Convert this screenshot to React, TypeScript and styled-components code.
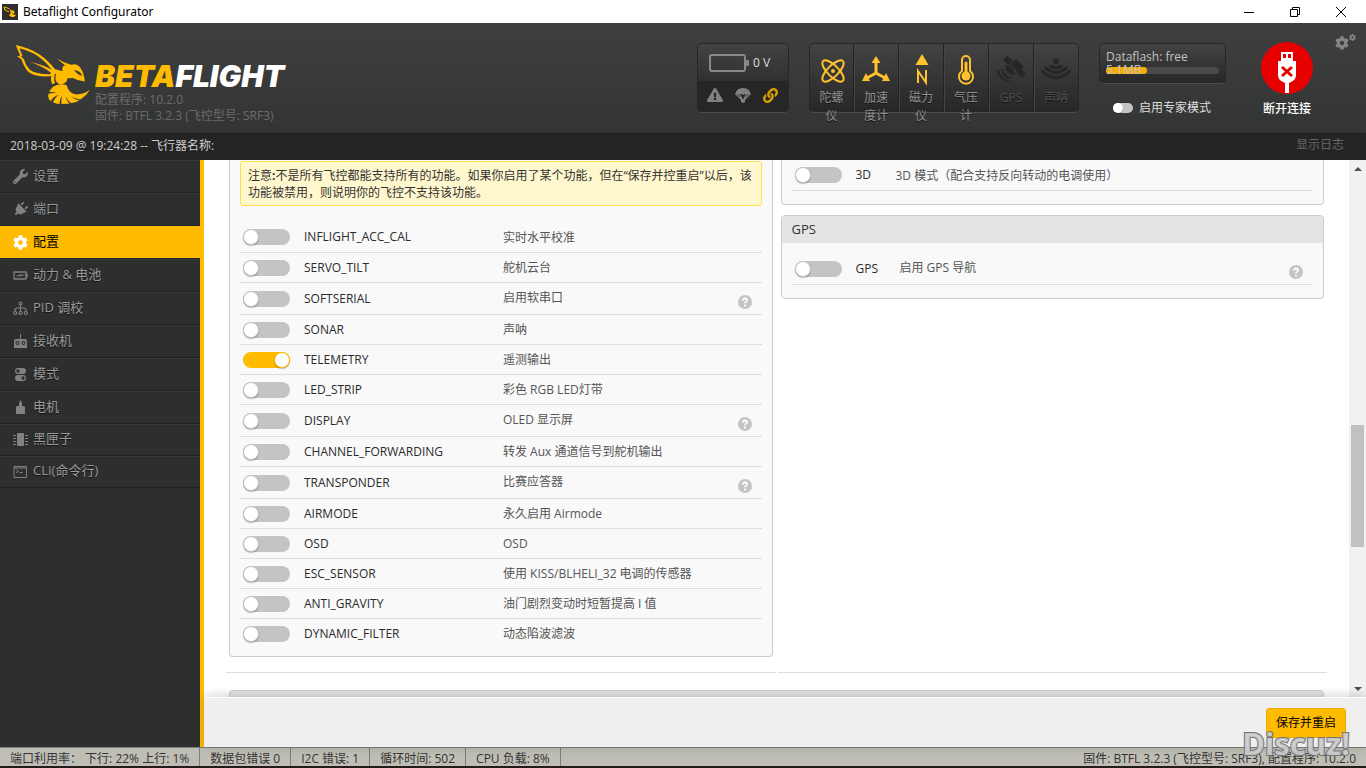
import React from 'react';
import styled, { createGlobalStyle } from 'styled-components';
import { FaWrench, FaPlug, FaCog, FaLink, FaExclamationTriangle } from 'react-icons/fa';

const GlobalStyle = createGlobalStyle`
  *, *::before { box-sizing: border-box; }
  body { margin: 0; background: #fff; }
  body, button, input {
    font-family: "Open Sans", "Noto Sans CJK SC", sans-serif;
    font-size: 12px;
  }
  button { border: 0; padding: 0; background: none; color: inherit; cursor: pointer; }
  a { color: inherit; text-decoration: none; }
  svg { display: block; flex: none; }
`;

/* ---------- window frame ---------- */

const Window = styled.div`
  position: relative;
  display: flex;
  flex-direction: column;
  height: 100vh;
  overflow: hidden;
`;

const TitleBar = styled.div`
  display: flex;
  align-items: center;
  gap: 5px;
  flex: none;
  height: 23px;
  padding: 0 2px;
  background: #fff;
  color: #000;
  font-family: "Noto Sans", "Open Sans", sans-serif;
`;

const WindowButtons = styled.div`
  display: flex;
  margin-left: auto;
`;

const WindowButton = styled.button`
  display: flex;
  align-items: center;
  justify-content: center;
  width: 46px;
  height: 20px;
`;

/* ---------- header ---------- */

const Header = styled.header`
  display: flex;
  align-items: flex-start;
  flex: none;
  height: 110px;
  padding: 18px 10px 0 14px;
  background: linear-gradient(#3e403f, #333534);
`;

const Brand = styled.div`
  display: flex;
  gap: 3px;
`;

const BrandText = styled.div`
  padding-top: 20px;
  color: #6a6b6a;
  line-height: 16px;
`;

const WordMark = styled.div`
  font-family: Inter, "Liberation Sans", sans-serif;
  font-size: 30px;
  font-weight: 900;
  font-style: italic;
  line-height: 31px;
  color: #fff;
  span { color: #ffbb00; }
`;

const Instruments = styled.div`
  display: flex;
  gap: 20px;
  margin-left: auto;
  padding-top: 2px;
`;

const Well = styled.div`
  border: 1px solid #272727;
  border-bottom-color: #4c4d4c;
  border-radius: 5px;
  background: linear-gradient(#434343, #272727);
`;

const BatteryWell = styled(Well)`
  display: flex;
  flex-direction: column;
  width: 92px;
  height: 70px;
  overflow: hidden;
  background: linear-gradient(#434343, #303030 38px);
`;

const BatteryTop = styled.div`
  display: flex;
  align-items: center;
  gap: 4px;
  height: 37px;
  padding-left: 11px;
  color: #ddd;
`;

const BatteryFlags = styled.div`
  display: flex;
  flex: 1;
  align-items: center;
  justify-content: space-between;
  padding: 0 10px 3px 9px;
  background: #262626;
  color: #818181;
`;

const SensorWell = styled(Well)`
  display: flex;
  height: 70px;
`;

const Sensor = styled.div<{ $on: boolean }>`
  width: 45px;
  height: 68px;
  padding: 9px 5px 0;
  border-right: 1px solid #222;
  box-shadow: inset 1px 0 #444;
  color: ${p => (p.$on ? '#929292' : '#525252')};
  line-height: 18px;
  text-align: center;
  text-shadow: 0 1px #111;
  &:first-child { width: 44px; box-shadow: none; }
  &:last-child { width: 44px; border-right: 0; }
  svg { margin: 0 auto 2px; color: ${p => (p.$on ? '#ffc22e' : '#262626')}; }
`;

const FlashColumn = styled.div`
  width: 127px;
`;

const FlashWell = styled(Well)`
  height: 41px;
  padding: 6px;
  color: #c4c4c4;
  line-height: 13px;
`;

const FlashBar = styled.div`
  height: 7px;
  margin-top: 4px;
  border-radius: 4px;
  background: #4a4a4a;
`;

const FlashLabel = styled.div`
  position: relative;
  z-index: 1;
  height: 13px;
`;

const FlashUsed = styled.div`
  width: 36%;
  height: 7px;
  border-radius: 4px;
  background: #f5ae00;
`;

const Expert = styled.label`
  display: flex;
  align-items: center;
  gap: 6px;
  margin: 15px 0 0 14px;
  color: #ddd;
  line-height: 17px;
`;

const Connect = styled.button`
  display: flex;
  flex-direction: column;
  align-items: center;
  gap: 6px;
  margin: -1px 0 0 15px;
  color: #fff;
  font-weight: 500;
  line-height: 18px;
`;

const Options = styled.button`
  display: flex;
  align-items: flex-start;
  margin: -9px 0 0 2px;
  color: #858685;
  svg:first-child { margin-top: 2px; }
`;

/* ---------- log line ---------- */

const LogBar = styled.div`
  display: flex;
  align-items: flex-start;
  justify-content: space-between;
  flex: none;
  height: 27px;
  padding: 0 22px 0 10px;
  background: #242424;
  color: #ccc;
  line-height: 25px;
`;

const ShowLog = styled.button`
  color: #666;
  line-height: 24px;
`;

/* ---------- body ---------- */

const Body = styled.div`
  display: flex;
  flex: 1;
  min-height: 0;
`;

const Sidebar = styled.nav`
  flex: none;
  width: 204px;
  border-right: 4px solid #ffbb00;
  background: #2e2e2e;
`;

const Tab = styled.a<{ $active?: boolean; $short?: boolean }>`
  display: flex;
  align-items: center;
  gap: 5px;
  height: ${p => (p.$short ? 32 : 33)}px;
  padding: 0 13px 5px;
  border-top: 1px solid ${p => (p.$active ? '#ffbb00' : '#3a3a3a')};
  border-bottom: 1px solid #202020;
  background: ${p => (p.$active ? '#ffbb00' : '#2e2e2e')};
  color: ${p => (p.$active ? '#000' : '#999')};
  font-size: 13px;
  text-shadow: ${p => (p.$active ? 'none' : '0 1px rgba(0,0,0,.6)')};
  svg { margin-top: 4px; color: ${p => (p.$active ? '#fff' : '#818181')}; }
`;

const PlugTab = styled(FaPlug)`
  transform: rotate(45deg);
`;

const Pane = styled.main`
  display: flex;
  flex-direction: column;
  flex: 1;
  min-width: 0;
`;

const Scroller = styled.div`
  display: flex;
  flex: 1;
  min-height: 0;
`;

const Content = styled.div`
  flex: 1;
  min-width: 0;
  padding: 0 22px;
  overflow: hidden;
`;

const Columns = styled.div`
  display: grid;
  grid-template-columns: 1fr 1fr;
  gap: 0 2px;
`;

const Column = styled.section`
  padding: 0 3px 15px;
  border-bottom: 1px solid #ddd;
`;

const Panel = styled.div<{ $cut?: boolean }>`
  margin-bottom: 10px;
  border: 1px solid #ccc;
  border-top-width: ${p => (p.$cut ? 0 : 1)}px;
  border-radius: ${p => (p.$cut ? '0 0 4px 4px' : '4px')};
  background: #f9f9f9;
`;

const LeftPanel = styled(Panel)`
  margin-bottom: 0;
  padding: 1px 10px 7px;
`;

const RightPanel = styled(Panel)`
  padding-bottom: 13px;
`;

const PanelBody = styled.div<{ $top: number }>`
  padding: ${p => p.$top}px 10px 0;
`;

const PanelTitle = styled.h2`
  margin: 0;
  height: 27px;
  padding-left: 10px;
  border-radius: 3px 3px 0 0;
  background: #e4e4e4;
  color: #333;
  font-size: 13px;
  font-weight: 400;
  line-height: 27px;
`;

const NextPanel = styled.div`
  margin: 17px 3px 0;
  height: 28px;
  border: 1px solid #ccc;
  border-radius: 4px 4px 0 0;
  background: #e4e4e4;
`;

const Note = styled.p`
  margin: 0 0 16px;
  padding: 5px 7px 4px;
  border: 1px solid #ffe055;
  border-radius: 3px;
  background: #fff7cd;
  color: #333;
  line-height: 17px;
`;

const FeatureTable = styled.table`
  width: 100%;
  border-collapse: collapse;
  table-layout: fixed;
  td { padding: 0; }
`;

const FeatureRow = styled.tr<{ $tall?: boolean }>`
  height: ${p => (p.$tall ? 32 : 30)}px;
  border-bottom: 1px solid #ddd;
`;

const FeatureBody = styled.tbody<{ $open?: boolean }>`
  tr:last-child { border-bottom-color: ${p => (p.$open ? 'transparent' : '#ddd')}; }
`;

const NameCell = styled.td<{ $width: number }>`
  width: ${p => p.$width}px;
  color: #2b2b2b;
  font-weight: 500;
`;

const SwitchCell = styled.td`
  width: 64px;
  input { margin: 1px 0 0 3px; }
`;

const TextCell = styled.td`
  color: #555;
`;

const TextLine = styled.div<{ $help?: boolean }>`
  display: flex;
  align-items: center;
  justify-content: space-between;
  padding: ${p => (p.$help ? 0 : 2)}px 10px 0 0;
  line-height: 18px;
`;

const Help = styled.button`
  display: flex;
  margin-top: 7px;
`;

const Toggle = styled.input<{ $small?: boolean }>`
  appearance: none;
  display: block;
  flex: none;
  width: ${p => (p.$small ? 20 : 47)}px;
  height: ${p => (p.$small ? 10 : 16)}px;
  margin: 0;
  border-radius: 8px;
  background: #c4c4c4;
  &::before {
    content: '';
    display: block;
    width: ${p => (p.$small ? 10 : 16)}px;
    height: ${p => (p.$small ? 10 : 16)}px;
    border: ${p => (p.$small ? 0 : 1)}px solid #c4c4c4;
    border-radius: 50%;
    background: #fff;
    box-shadow: 0 1px 1px rgba(0,0,0,.25);
  }
  &:checked { background: #ffbb00; }
  &:checked::before { margin-left: auto; border-color: #ffbb00; }
`;

const ScrollTrack = styled.div`
  display: flex;
  flex-direction: column;
  align-items: center;
  flex: none;
  width: 17px;
  background: #f1f1f1;
`;

const ScrollEnd = styled.div`
  display: flex;
  align-items: center;
  justify-content: center;
  height: 17px;
`;

const ScrollSpace = styled.div<{ $part: number; $thumb?: boolean }>`
  flex: ${p => p.$part};
  width: 13px;
  background: ${p => (p.$thumb ? '#c1c1c1' : 'transparent')};
`;

const Toolbar = styled.div`
  position: relative;
  display: flex;
  justify-content: flex-end;
  flex: none;
  height: 50px;
  padding: 10px 20px 0;
  background: #efefef;
  box-shadow: 0 -1px 10px rgba(0,0,0,.2);
  border-top: 1px solid #fff;
`;

const Save = styled.button`
  width: 80px;
  height: 30px;
  padding-bottom: 2px;
  border: 1px solid #e8aa00;
  border-radius: 3px;
  background: #ffbb00;
  color: #000;
`;

/* ---------- status line ---------- */

const StatusBar = styled.footer`
  display: flex;
  flex: none;
  height: 21px;
  border-top: 1px solid #7d7d79;
  border-bottom: 2px solid #231c1a;
  background: #bfbeb5;
  color: #333;
  line-height: 22px;
  white-space: nowrap;
  overflow: hidden;
`;

const StatusItem = styled.div`
  padding: 0 10px;
  border-right: 1px solid #7d7d79;
`;

const StatusVersion = styled.div`
  margin-left: auto;
  padding-right: 10px;
`;

const Watermark = styled.div`
  position: absolute;
  right: 16px;
  bottom: 5px;
  font-family: "Noto Sans", "Open Sans", sans-serif;
  font-size: 31px;
  font-weight: 700;
  line-height: 40px;
  color: rgba(205,205,208,.9);
  -webkit-text-stroke: 2px #77777a;
  paint-order: stroke fill;
`;

/* ---------- drawings ---------- */

const Bee = ({ width = 76, height = 62 }: { width?: number; height?: number }) => (
  <svg width={width} height={height} viewBox="12 12 228 186" fill="#ffbb00" aria-hidden="true">
    <path fillRule="evenodd" d="M17 17 Q58 26 86 44 Q112 62 132 88 L152 93 L146 101 L128 101 Q124 110 104 109 Q66 110 50 92 Q40 78 33 58 L21 50 L30 48 Z M28 27 L37 50 L31 49 L41 59 Q46 78 58 90 Q74 103 116 103 L126 95 Q106 66 82 50 Q58 34 28 27Z" />
    <path d="M58 66 Q98 74 130 94 L122 100 Q98 80 58 66Z" />
    <path d="M124 98 L134 97 Q126 112 132 128 L124 133 Q116 116 124 98Z" />
    <path d="M138 57 Q158 70 180 76 L172 84 Q158 76 138 57Z" />
    <path fillRule="evenodd" d="M158 78 Q170 74 180 75 Q196 70 206 84 Q217 100 219 124 Q198 122 182 113 Q176 116 168 114 Q168 126 158 130 Q144 136 135 124 Q130 108 138 98 Q148 92 155 93 Q150 84 158 78Z M187 91 Q198 104 212 109 Q208 98 201 94 Q193 91 187 91Z" />
    <path d="M126 139 Q148 128 166 135 Q172 160 196 162 Q216 161 234 148 Q224 164 212 172 Q196 190 150 190 Q124 190 114 176 Q106 158 126 139Z" />
    <g fill="#393b3a">
      <path d="M108 153 L138 156 L110 160Z" />
      <path d="M119 182 Q126 168 144 162 Q130 172 126 187Z" />
      <path d="M145 193 Q144 178 152 166 Q149 180 151 193Z" />
      <path d="M176 191 Q166 182 163 168 Q170 182 182 190Z" />
      <path d="M206 181 Q190 178 179 167 Q192 176 211 176Z" />
    </g>
  </svg>
);

const line = { fill: 'none', stroke: 'currentColor', strokeLinecap: 'round', strokeLinejoin: 'round' } as const;

const GyroIcon = () => (
  <svg width="30" height="34" viewBox="0 0 30 34" {...line} strokeWidth="2">
    <ellipse cx="16" cy="18" rx="14" ry="5.500" transform="rotate(45 16 18)" />
    <ellipse cx="16" cy="18" rx="14" ry="5.500" transform="rotate(-45 16 18)" />
    <circle cx="16" cy="18" r="1" />
  </svg>
);
const AccelIcon = () => (
  <svg width="30" height="34" viewBox="0 0 30 34" fill="currentColor">
    <path d="M15 8v12M15 20l-9 5M15 20l9 5" stroke="currentColor" strokeWidth="3" fill="none" />
    <path d="M15 3l4.500 7h-9zM1 28l4-8 4 8zM29 28l-4-8-4 8z" />
  </svg>
);
const MagIcon = () => (
  <svg width="30" height="34" viewBox="0 0 30 34" fill="currentColor">
    <path d="M16 1l6.500 11h-13z" />
    <path d="M12 30V18l8 11.500V17" fill="none" stroke="currentColor" strokeWidth="2" />
  </svg>
);
const BaroIcon = () => (
  <svg width="30" height="34" viewBox="0 0 30 34" {...line} strokeWidth="2">
    <path d="M11 18V7a4 4 0 0 1 8 0v11a7 7 0 1 1-8 0z" />
    <circle cx="15" cy="23" r="4.500" fill="currentColor" stroke="none" />
    <path d="M15 10v13" strokeWidth="3" />
  </svg>
);
const SatIcon = () => (
  <svg width="30" height="34" viewBox="0 0 30 34" fill="currentColor">
    <path d="M11 3l6 5-4 4-6-5zM24 15l6 6-4 4-6-6zM14 12l6-6 8 8-5 5z" />
    <path d="M10 12l4 1 4 4 1 4a7 7 0 0 1-9-9z" />
    <path d="M6 16a9 9 0 0 0 9 9M2 17a12 12 0 0 0 11 11" fill="none" stroke="currentColor" strokeWidth="2" />
  </svg>
);
const SonarIcon = () => (
  <svg width="30" height="34" viewBox="0 0 30 34" {...line} strokeWidth="2">
    <circle cx="15" cy="8" r="2" fill="currentColor" />
    <path d="M10 13q5 4 10 0M5 15q10 9 20 0M1 18q14 13 28 0" strokeWidth="3" />
  </svg>
);

const Parachute = () => (
  <svg width="16" height="15" viewBox="0 0 16 15" fill="currentColor">
    <path d="M0 7Q1 0 8 0t8 7q-2-2-3.500 0Q10 5 8 7 6 5 3.500 7 2 5 0 7z" />
    <path d="M1 6l6 6M15 6l-6 6M4.500 6l2.500 5M11.500 6L9 11" stroke="currentColor" fill="none" strokeWidth="1.300" />
    <path d="M6 11h4v3l-2 1-2-1z" />
  </svg>
);

const BatteryIcon = () => (
  <svg width="40" height="18" viewBox="0 0 40 18">
    <rect x="1" y="1" width="35" height="16" rx="2" fill="none" stroke="#8a8a8a" strokeWidth="2" />
    <rect x="37" y="6" width="3" height="6" rx="1" fill="#8a8a8a" />
  </svg>
);

const UsbIcon = () => (
  <svg width="52" height="52" viewBox="0 0 52 52">
    <circle cx="26" cy="26" r="26" fill="#e60000" />
    <path fill="#fff" fillRule="evenodd" d="M20 10h12v9H20zM22 12v4h3v-4zM27 12v4h3v-4z" />
    <path fill="#fff" d="M17 19h18v14q0 5-5 7l-2 1v10h-4V41l-2-1q-5-2-5-7z" />
    <path d="M21 25l10 9M31 25l-10 9" stroke="#e60000" strokeWidth="3" />
  </svg>
);

const HelpIcon = () => (
  <svg width="14" height="14" viewBox="0 0 14 14">
    <circle cx="7" cy="7" r="7" fill="#c4c4c4" />
    <path d="M5 5.500Q5 3.500 7 3.500T9 5.300Q9 6.300 8 6.800T7 8.300" fill="none" stroke="#fff" strokeWidth="1.800" />
    <circle cx="7" cy="10.500" r="1.100" fill="#fff" />
  </svg>
);

const PowerTab = () => (
  <svg width="15" height="15" viewBox="0 0 15 15" {...line}>
    <path d="M1 4h12v7H1zM14 6v3" strokeWidth="1.300" />
    <path d="M4 8l2-1 1 1.500L8 6l1 1.500 2-.5" />
  </svg>
);
const PidTab = () => (
  <svg width="15" height="15" viewBox="0 0 15 15" {...line} strokeWidth="1.200">
    <circle cx="7.500" cy="2.500" r="1.500" /><path d="M7.500 4v6M2 10V8l2-1h7l2 1v2" />
    <circle cx="2.200" cy="12" r="1.500" /><circle cx="7.500" cy="12" r="1.500" /><circle cx="12.800" cy="12" r="1.500" />
  </svg>
);
const ReceiverTab = () => (
  <svg width="15" height="15" viewBox="0 0 15 15" fill="currentColor">
    <path fillRule="evenodd" d="M7 0h1v5h4q2 0 2 2v7H1V7q0-2 2-2h4zM4.500 7a2 2 0 1 0 .01 0zM10.500 7a2 2 0 1 0 .01 0z" />
    <circle cx="4.500" cy="9" r="1" /><circle cx="10.500" cy="9" r="1" />
  </svg>
);
const ModesTab = () => (
  <svg width="15" height="15" viewBox="0 0 15 15" fill="currentColor">
    <path fillRule="evenodd" d="M5 1h5a3 3 0 0 1 0 6H5a3 3 0 0 1 0-6zm0 1.300a1.700 1.700 0 1 0 .01 0zM5 8h5a3 3 0 0 1 0 6H5a3 3 0 0 1 0-6zm5 1.300a1.700 1.700 0 1 0 .01 0z" />
  </svg>
);
const MotorTab = () => (
  <svg width="15" height="15" viewBox="0 0 15 15" fill="currentColor">
    <path d="M7.500 0l1.500 3v3h2l1 1v7H3V7l1-1h2V3z" />
  </svg>
);
const BlackboxTab = () => (
  <svg width="15" height="15" viewBox="0 0 15 15" fill="currentColor">
    <rect x="4" y="1" width="7" height="13" rx="1" />
    <path d="M0 3.500h3M0 6.500h3M0 9.500h3M0 12.500h3M12 3.500h3M12 6.500h3M12 9.500h3M12 12.500h3" stroke="currentColor" />
  </svg>
);
const CliTab = () => (
  <svg width="15" height="15" viewBox="0 0 15 15" {...line}>
    <path d="M1.500 2.500h12v11h-12zM1.500 4h12M3.500 6l2 1.500-2 1M7 8.500h2" />
  </svg>
);

/* ---------- data ---------- */

const tabs = [
  { text: '设置', icon: <FaWrench size={15} /> },
  { text: '端口', icon: <PlugTab size={15} /> },
  { text: '配置', icon: <FaCog size={15} />, active: true },
  { text: '动力 & 电池', icon: <PowerTab /> },
  { text: 'PID 调校', icon: <PidTab /> },
  { text: '接收机', icon: <ReceiverTab /> },
  { text: '模式', icon: <ModesTab /> },
  { text: '电机', icon: <MotorTab /> },
  { text: '黑匣子', icon: <BlackboxTab />, short: true },
  { text: 'CLI(命令行)', icon: <CliTab />, short: true },
];

const sensors = [
  { text: '陀螺仪', icon: <GyroIcon />, on: true },
  { text: '加速度计', icon: <AccelIcon />, on: true },
  { text: '磁力仪', icon: <MagIcon />, on: true },
  { text: '气压计', icon: <BaroIcon />, on: true },
  { text: 'GPS', icon: <SatIcon />, on: false },
  { text: '声呐', icon: <SonarIcon />, on: false },
];

const features = [
  { name: 'INFLIGHT_ACC_CAL', text: '实时水平校准' },
  { name: 'SERVO_TILT', text: '舵机云台' },
  { name: 'SOFTSERIAL', text: '启用软串口', help: true },
  { name: 'SONAR', text: '声呐' },
  { name: 'TELEMETRY', text: '遥测输出', on: true },
  { name: 'LED_STRIP', text: '彩色 RGB LED灯带' },
  { name: 'DISPLAY', text: 'OLED 显示屏', help: true },
  { name: 'CHANNEL_FORWARDING', text: '转发 Aux 通道信号到舵机输出' },
  { name: 'TRANSPONDER', text: '比赛应答器', help: true },
  { name: 'AIRMODE', text: '永久启用 Airmode' },
  { name: 'OSD', text: 'OSD' },
  { name: 'ESC_SENSOR', text: '使用 KISS/BLHELI_32 电调的传感器' },
  { name: 'ANTI_GRAVITY', text: '油门剧烈变动时短暂提高 I 值' },
  { name: 'DYNAMIC_FILTER', text: '动态陷波滤波' },
];

const status = ['端口利用率： 下行: 22% 上行: 1%', '数据包错误 0', 'I2C 错误: 1', '循环时间: 502', 'CPU 负载: 8%'];

type FeatureProps = { name: string; text: string; on?: boolean; help?: boolean; nameWidth: number };

const Feature = ({ name, text, on, help, nameWidth }: FeatureProps) => (
  <FeatureRow $tall={help}>
    <SwitchCell><Toggle type="checkbox" id={'feature-' + name} defaultChecked={on} /></SwitchCell>
    <NameCell $width={nameWidth}><label htmlFor={'feature-' + name}>{name}</label></NameCell>
    <TextCell>
      <TextLine $help={help}>
        <span>{text}</span>
        {help && <Help type="button" aria-label="Help"><HelpIcon /></Help>}
      </TextLine>
    </TextCell>
  </FeatureRow>
);

export default function App() {
  return (
    <Window>
      <GlobalStyle />
      <TitleBar>
        <svg width="16" height="16" viewBox="0 0 16 16">
          <rect width="16" height="16" fill="#2e2e2e" />
          <path d="M2 3l5 1.500 2 2.500M2 3l1 3 4 2" stroke="#ffbb00" fill="none" />
          <path d="M8 7l3-1 2 3-2 .5-1 .5 4 1-2 2H9l-2-2 2-2z" fill="#ffbb00" />
        </svg>
        Betaflight Configurator
        <WindowButtons>
          <WindowButton aria-label="Minimize"><svg width="10" height="10"><path d="M0 5.500h10" stroke="#000" /></svg></WindowButton>
          <WindowButton aria-label="Restore">
            <svg width="10" height="10" fill="none" stroke="#000"><path d="M.5 2.500h7v7h-7zM2.500 2.500v-2h7v7h-2" /></svg>
          </WindowButton>
          <WindowButton aria-label="Close"><svg width="10" height="10"><path d="M0 0l10 10M10 0L0 10" stroke="#000" /></svg></WindowButton>
        </WindowButtons>
      </TitleBar>

      <Header>
        <Brand>
          <Bee width={78} height={68} />
          <BrandText>
            <WordMark><span>BETA</span>FLIGHT</WordMark>
            配置程序: 10.2.0<br />固件: BTFL 3.2.3 (飞控型号: SRF3)
          </BrandText>
        </Brand>
        <Instruments>
          <BatteryWell>
            <BatteryTop><BatteryIcon />0 V</BatteryTop>
            <BatteryFlags>
              <FaExclamationTriangle size={16} />
              <Parachute />
              <FaLink size={15} color="#d9a000" />
            </BatteryFlags>
          </BatteryWell>
          <SensorWell>
            {sensors.map(s => <Sensor key={s.text} $on={s.on}>{s.icon}{s.text}</Sensor>)}
          </SensorWell>
          <FlashColumn>
            <FlashWell>
              <FlashLabel>Dataflash: free 5.1MB</FlashLabel>
              <FlashBar><FlashUsed /></FlashBar>
            </FlashWell>
            <Expert><Toggle $small type="checkbox" />启用专家模式</Expert>
          </FlashColumn>
          <Connect><UsbIcon />断开连接</Connect>
          <Options aria-label="Options"><FaCog size={14} /><FaCog size={7} /></Options>
        </Instruments>
      </Header>

      <LogBar>
        <span>2018-03-09 @ 19:24:28 -- 飞行器名称:</span>
        <ShowLog>显示日志</ShowLog>
      </LogBar>

      <Body>
        <Sidebar>
          {tabs.map(t => (
            <Tab key={t.text} href="#" $active={t.active} $short={t.short}>{t.icon}{t.text}</Tab>
          ))}
        </Sidebar>
        <Pane>
          <Scroller>
            <Content>
              <Columns>
                <Column>
                  <LeftPanel $cut>
                    <Note>注意<b>:</b>不是所有飞控都能支持所有的功能。如果你启用了某个功能，但在“保存并控重启”以后，该功能被禁用，则说明你的飞控不支持该功能。</Note>
                    <FeatureTable>
                      <FeatureBody $open>
                        {features.map(f => <Feature key={f.name} {...f} nameWidth={199} />)}
                      </FeatureBody>
                    </FeatureTable>
                  </LeftPanel>
                </Column>
                <Column>
                  <RightPanel $cut>
                    <PanelBody $top={0}>
                      <FeatureTable>
                        <FeatureBody>
                          <Feature name="3D" text="3D 模式（配合支持反向转动的电调使用）" nameWidth={40} />
                        </FeatureBody>
                      </FeatureTable>
                    </PanelBody>
                  </RightPanel>
                  <RightPanel>
                    <PanelTitle>GPS</PanelTitle>
                    <PanelBody $top={10}>
                      <FeatureTable>
                        <FeatureBody>
                          <Feature name="GPS" text="启用 GPS 导航" help nameWidth={44} />
                        </FeatureBody>
                      </FeatureTable>
                    </PanelBody>
                  </RightPanel>
                </Column>
              </Columns>
              <NextPanel />
            </Content>
            <ScrollTrack>
              <ScrollEnd><svg width="8" height="4"><path d="M0 4l4-4 4 4z" fill="#505050" /></svg></ScrollEnd>
              <ScrollSpace $part={248} />
              <ScrollSpace $part={122} $thumb />
              <ScrollSpace $part={133} />
              <ScrollEnd><svg width="8" height="4"><path d="M0 0l4 4 4-4z" fill="#505050" /></svg></ScrollEnd>
            </ScrollTrack>
          </Scroller>
          <Toolbar><Save>保存并重启</Save></Toolbar>
        </Pane>
      </Body>

      <StatusBar>
        {status.map(s => <StatusItem key={s}>{s}</StatusItem>)}
        <StatusVersion>固件: BTFL 3.2.3 (飞控型号: SRF3), 配置程序: 10.2.0</StatusVersion>
      </StatusBar>
      <Watermark>Discuz!</Watermark>
    </Window>
  );
}
